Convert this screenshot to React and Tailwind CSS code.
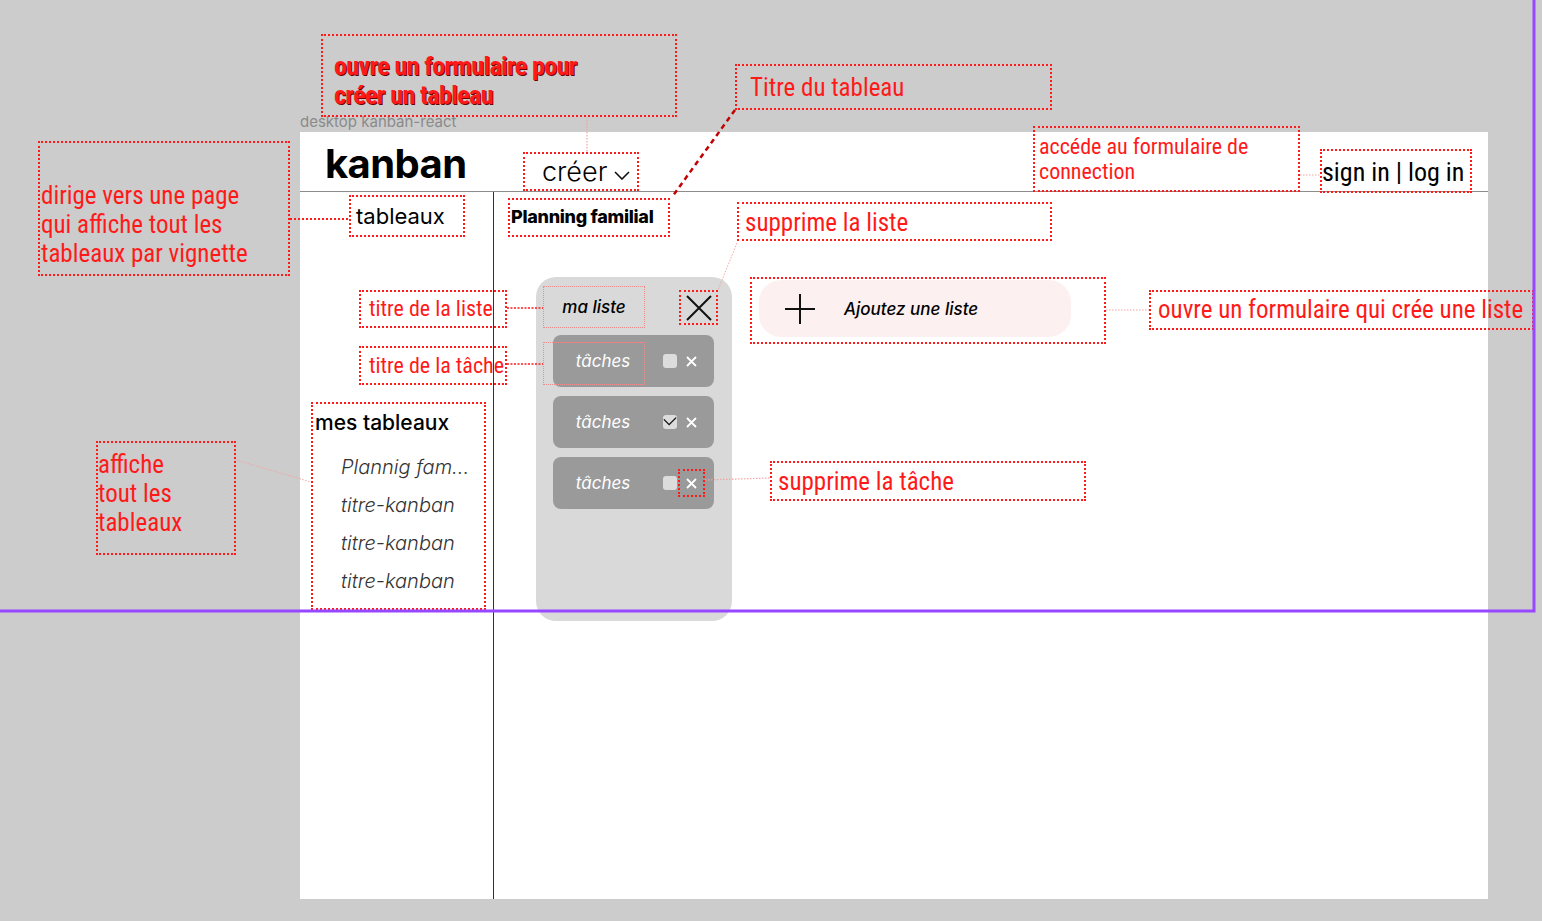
const ann = "font-['Roboto_Condensed','Open_Sans',sans-serif]";
const ui = "font-['Inter','Liberation_Sans',sans-serif]";
const dot = "border-2 border-dotted border-[#ff1a1a]";

function Note({ className, children }) {
  return (
    <div className={`absolute ${dot} ${ann} text-[#ff1a1a] ${className}`}>
      {children}
    </div>
  );
}

function Task({ checked, marked }) {
  return (
    <div className="flex h-[52px] w-[161px] items-center rounded-[8px] bg-[#9a9a9a]">
      <span className="mt-[2px] w-[100px] text-center text-[17px] italic text-white">tâches</span>
      <span className="ml-[10px] flex h-[14px] w-[14px] items-center justify-center rounded-[3px] bg-[#dcdcdc]">
        {checked && (
          <svg width="16" height="12" viewBox="0 0 16 12">
            <path d="M1 3 L7 9 L15 1" fill="none" stroke="#111" strokeWidth="1.6" />
          </svg>
        )}
      </span>
      <span
        className={`ml-[1px] flex h-[28px] w-[27px] items-center justify-center ${
          marked ? dot : "border-2 border-transparent"
        }`}
      >
        <svg width="11" height="11" viewBox="0 0 11 11">
          <path d="M1 1 L10 10 M10 1 L1 10" stroke="#fff" strokeWidth="1.8" />
        </svg>
      </span>
    </div>
  );
}

export default function App() {
  return (
    <div className={`relative h-[921px] w-[1542px] overflow-hidden bg-[#cccccc] ${ui}`}>
      <div className="absolute left-[300px] top-[111px] text-[15px] text-[#8a8a8a]">desktop kanban-react</div>

      {/* frame */}
      <div className="absolute left-[300px] top-[132px] flex h-[767px] w-[1188px] flex-col bg-white text-black">
        <header className="flex h-[60px] shrink-0 items-start border-b border-[#8c8c8c]">
          <div className="mt-[12px] w-[223px] pl-[25px] text-[40px] font-bold leading-none tracking-[-0.6px]">kanban</div>
          <div className={`mt-[20px] flex h-[39px] w-[116px] items-center gap-[7px] pl-[17px] ${dot}`}>
            <span className="text-[27px] font-light leading-none">créer</span>
            <svg width="16" height="9" viewBox="0 0 16 9" className="mt-[8px]">
              <path d="M1 1 L8 8 L15 1" fill="none" stroke="#111" strokeWidth="1.6" />
            </svg>
          </div>
          <div className={`ml-auto mr-[16px] mt-[17px] flex h-[44px] w-[152px] items-center whitespace-nowrap pt-[2px] text-[26px] ${dot} ${ann}`}>
            sign in | log in
          </div>
        </header>

        <div className="flex flex-1">
          <aside className="flex w-[194px] shrink-0 flex-col border-r border-[#333]">
            <div className={`ml-[49px] mt-[3px] flex h-[42px] w-[116px] items-center pl-[5px] text-[22px] ${dot}`}>tableaux</div>
            <div className={`ml-[11px] mt-[165px] h-[208px] w-[175px] pt-[3px] ${dot}`}>
              <div className="pl-[2px] text-[21px] font-medium">mes tableaux</div>
              <ul className="mt-[15px] flex flex-col gap-[11px] pl-[28px] text-[20px] font-light italic text-[#333]">
                <li className="leading-[27px]">Plannig fam...</li>
                <li className="leading-[27px]">titre-kanban</li>
                <li className="leading-[27px]">titre-kanban</li>
                <li className="leading-[27px]">titre-kanban</li>
              </ul>
            </div>
          </aside>

          <main className="flex flex-1 flex-col">
            <div className={`ml-[14px] mt-[6px] flex h-[39px] w-[162px] items-center whitespace-nowrap pb-[2px] pl-[1px] text-[18px] font-extrabold tracking-[-0.3px] ${dot}`}>
              Planning familial
            </div>
            <div className="ml-[42px] mt-[40px] flex items-start">
              <section className="relative h-[344px] w-[196px] rounded-[20px] bg-[#d9d9d9] pl-[7px] pt-[9px]">
                <div className="flex items-start">
                  <div className="flex h-[42px] w-[102px] items-center justify-center border border-dotted border-[#f08c8c] pt-[2px] text-[17px] font-medium italic">
                    ma liste
                  </div>
                  <div className={`ml-[34px] mt-[4px] flex h-[35px] w-[39px] items-center justify-center ${dot}`}>
                    <svg width="26" height="26" viewBox="0 0 26 26">
                      <path d="M1 1 L25 25 M25 1 L1 25" stroke="#111" strokeWidth="2" />
                    </svg>
                  </div>
                </div>
                <div className="ml-[10px] mt-[7px] flex flex-col gap-[9px]">
                  <Task />
                  <Task checked />
                  <Task marked />
                </div>
                <div className="absolute left-[7px] top-[65px] h-[43px] w-[102px] border border-dotted border-[#f08c8c]" />
              </section>

              <div className={`ml-[18px] h-[67px] w-[356px] pl-[7px] pt-[1px] ${dot}`}>
                <div className="flex h-[57px] w-[312px] items-center rounded-[22px] bg-[#fdf0f0] pl-[26px]">
                  <svg width="30" height="30" viewBox="0 0 30 30">
                    <path d="M0 15 H30 M15 0 V30" stroke="#111" strokeWidth="2" />
                  </svg>
                  <span className="ml-[29px] mt-[3px] text-[17px] font-medium italic">Ajoutez une liste</span>
                </div>
              </div>
            </div>
          </main>
        </div>
      </div>

      {/* annotations */}
      <Note className="left-[321px] top-[34px] h-[83px] w-[356px] pl-[11px] pt-[16px] text-[26px] font-bold leading-[29px] tracking-[-0.6px] text-[#d40000] [text-shadow:1px_1px_0_#6b0000]">
        ouvre un formulaire pour
        <br />
        créer un tableau
      </Note>
      <Note className="left-[735px] top-[64px] flex h-[46px] w-[317px] items-center pl-[13px] pt-[2px] text-[25px]">Titre du tableau</Note>
      <Note className="left-[1033px] top-[126px] h-[66px] w-[267px] pl-[4px] pt-[6px] text-[22px] leading-[25px]">
        accéde au formulaire de
        <br />
        connection
      </Note>
      <Note className="left-[38px] top-[141px] flex h-[135px] w-[252px] flex-col justify-end pb-[6px] pl-[1px] text-[25px] leading-[29px]">
        <span>dirige vers une page</span>
        <span>qui affiche tout les</span>
        <span>tableaux par vignette</span>
      </Note>
      <Note className="left-[737px] top-[202px] flex h-[39px] w-[315px] items-center pl-[6px] pt-[2px] text-[25px]">supprime la liste</Note>
      <Note className="left-[359px] top-[290px] flex h-[38px] w-[148px] items-center whitespace-nowrap pb-[2px] pl-[8px] text-[22px]">titre de la liste</Note>
      <Note className="left-[359px] top-[346px] flex h-[39px] w-[148px] items-center whitespace-nowrap pb-[1px] pl-[8px] text-[22px]">titre de la tâche</Note>
      <Note className="left-[1149px] top-[290px] flex h-[40px] w-[385px] items-center whitespace-nowrap pl-[7px] text-[25px]">
        ouvre un formulaire qui crée une liste
      </Note>
      <Note className="left-[96px] top-[441px] flex h-[114px] w-[140px] flex-col pt-[7px] text-[25px] leading-[29px]">
        <span>affiche</span>
        <span>tout les</span>
        <span>tableaux</span>
      </Note>
      <Note className="left-[770px] top-[461px] flex h-[40px] w-[316px] items-center pl-[6px] pt-[2px] text-[25px]">supprime la tâche</Note>

      {/* connectors and frame outline */}
      <svg className="pointer-events-none absolute inset-0" width="1542" height="921">
        <g fill="none">
          <path d="M587 117 V152" stroke="#f5a3a3" strokeWidth="1.2" strokeDasharray="1.5 1.5" />
          <path d="M735 110 L672 197" stroke="#c40000" strokeWidth="2.5" strokeDasharray="5 4" />
          <path d="M1300 175 H1320" stroke="#f5a3a3" strokeWidth="1.2" strokeDasharray="1.5 1.5" />
          <path d="M290 219 H349" stroke="#ff1a1a" strokeWidth="2" strokeDasharray="2 2" />
          <path d="M737 243 L718 290" stroke="#f5a3a3" strokeWidth="1" strokeDasharray="1.5 1.5" />
          <path d="M507 308 H543" stroke="#ff1a1a" strokeWidth="1.5" strokeDasharray="2 1.5" />
          <path d="M507 364 H543" stroke="#ff1a1a" strokeWidth="1.5" strokeDasharray="2 1.5" />
          <path d="M1106 310 H1149" stroke="#f5a3a3" strokeWidth="1.2" strokeDasharray="1.5 1.5" />
          <path d="M236 460 L311 482" stroke="#f5a3a3" strokeWidth="1" strokeDasharray="1.5 1.5" />
          <path d="M705 480 L770 478" stroke="#f5a3a3" strokeWidth="1.2" strokeDasharray="1.5 1.5" />
          <path d="M0 611 H1534 V0" stroke="#9747ff" strokeWidth="3" />
        </g>
      </svg>
    </div>
  );
}
